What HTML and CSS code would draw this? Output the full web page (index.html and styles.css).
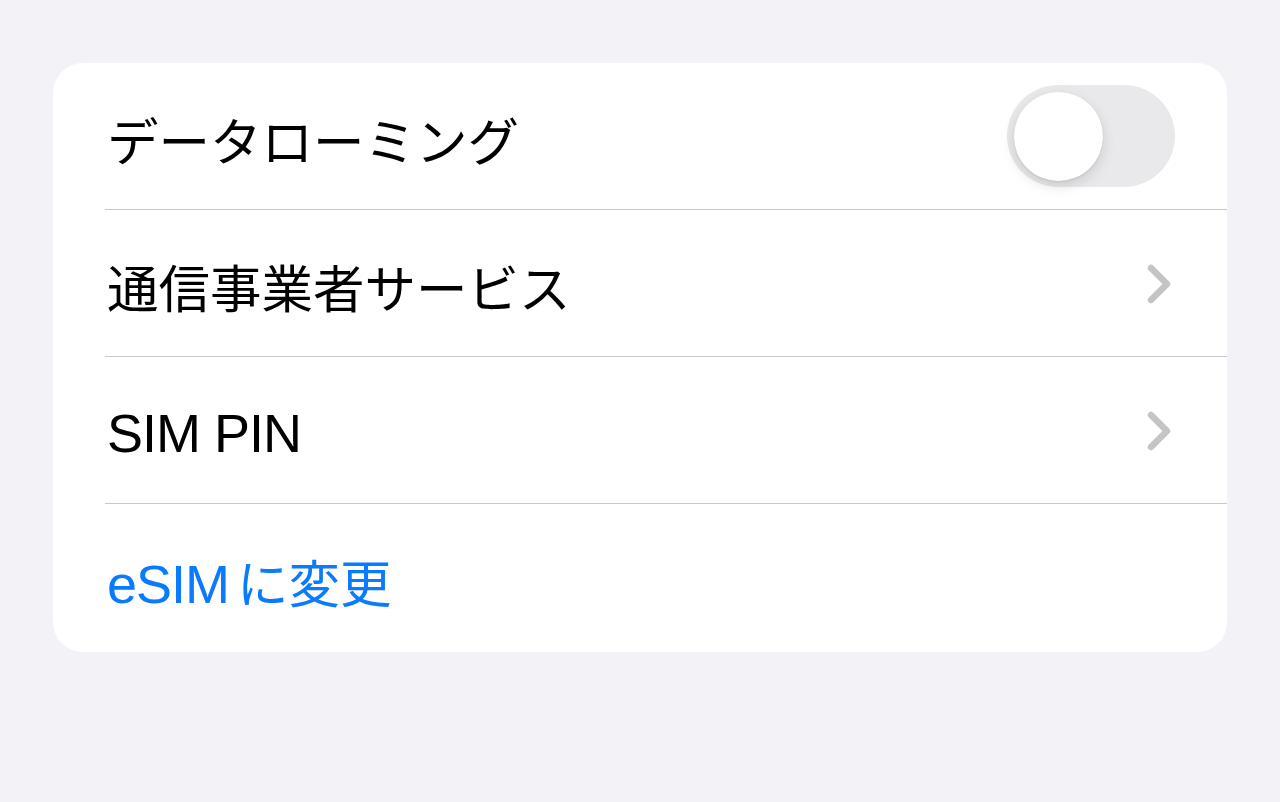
FILE: index.html
```html
<!DOCTYPE html>
<html lang="ja">
<head>
    <meta charset="UTF-8">
    <meta name="viewport" content="width=device-width, initial-scale=1.0">
    <title>モバイル通信</title>
    <link rel="stylesheet" href="styles.css">
</head>
<body>
    <div class="group">
        <div class="row">
            <div class="row-inner">
                <span class="label">データローミング</span>
                <div class="switch">
                    <div class="knob"></div>
                </div>
            </div>
        </div>
        <div class="row">
            <div class="row-inner">
                <span class="label">通信事業者サービス</span>
                <svg class="chevron" viewBox="0 0 26 42">
                    <path d="M5 5 L21 21 L5 37"></path>
                </svg>
            </div>
        </div>
        <div class="row">
            <div class="row-inner">
                <span class="label"><span class="latin">SIM PIN</span></span>
                <svg class="chevron" viewBox="0 0 26 42">
                    <path d="M5 5 L21 21 L5 37"></path>
                </svg>
            </div>
        </div>
        <div class="row">
            <div class="row-inner last">
                <span class="label link"><span class="latin">eSIM</span><span class="jp-after">に変更</span></span>
            </div>
        </div>
    </div>
</body>
</html>
```

FILE: styles.css
```css
body {
    margin: 0;
    background-color: #f2f2f7;
    font-family: "Liberation Sans", "Noto Sans CJK JP", sans-serif;
    padding: 63px 53px 0 53px;
}
.group {
    background: #fff;
    border-radius: 30px;
    overflow: hidden;
}
.row {
    padding-left: 52px;
}
.row-inner {
    height: 146px;
    display: flex;
    align-items: center;
    justify-content: space-between;
    border-bottom: 1px solid #c8c8cb;
    padding-right: 52px;
}
.row-inner.last {
    border-bottom: none;
    height: 148px;
}
.label {
    font-size: 51.5px;
    color: #000;
    padding-left: 2px;
    padding-top: 5px;
}
.latin {
    font-size: 54px;
    letter-spacing: -1px;
}
.jp-after {
    margin-left: 8px;
}
.link {
    color: #0a7aff;
}
.switch {
    width: 168px;
    height: 102px;
    border-radius: 51px;
    background: #e9e9eb;
    position: relative;
}
.knob {
    position: absolute;
    left: 7px;
    top: 6.5px;
    width: 89px;
    height: 89px;
    border-radius: 50%;
    background: #fff;
    box-shadow: 0 5px 14px rgba(0, 0, 0, 0.13), 0 1px 2px rgba(0, 0, 0, 0.08);
}
.chevron {
    width: 26px;
    height: 42px;
    margin-right: 3px;
    margin-top: 2px;
}
.chevron path {
    fill: none;
    stroke: #c4c4c7;
    stroke-width: 6.5;
    stroke-linecap: round;
    stroke-linejoin: round;
}
```
